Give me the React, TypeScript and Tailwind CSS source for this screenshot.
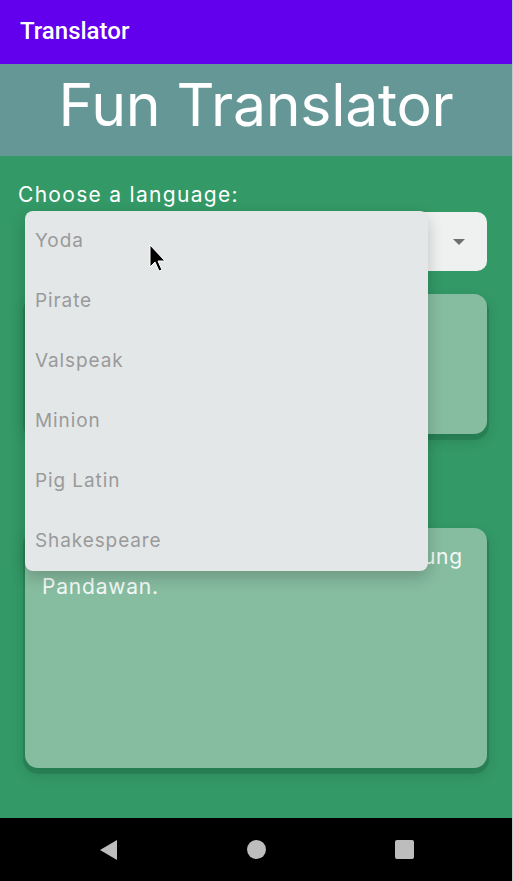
import React from 'react'

const LANGUAGES = ['Yoda', 'Pirate', 'Valspeak', 'Minion', 'Pig Latin', 'Shakespeare']

const font = { fontFamily: 'Inter, "Noto Sans", sans-serif' }

function Cursor() {
  return (
    <svg className="absolute left-[149px] top-[244px] w-[20px] h-[32px]" viewBox="0 0 20 32">
      <path d="M1 1 L1 23 L6 18 L10 27 L13 26 L9 17 L16 17 Z" fill="#000" stroke="#fff" strokeWidth={1} />
    </svg>
  )
}

export default function App() {
  return (
    <div className="relative w-[513px] h-[881px] flex flex-col overflow-hidden border-r border-[#c8c8c8]" style={font}>
      {/* app bar */}
      <div className="h-[64px] bg-[#6200ee] flex items-center px-5 shrink-0">
        <span className="text-white text-[24px] font-medium -mt-[2px]" style={{ fontFamily: 'Roboto, sans-serif' }}>Translator</span>
      </div>

      {/* title */}
      <div className="h-[92px] bg-[#659796] flex items-center justify-center shrink-0">
        <h1 className="text-white text-[59px] font-normal leading-none tracking-[-0.3px] -mt-[12px]">Fun Translator</h1>
      </div>

      {/* body */}
      <div className="flex-1 bg-[#339966] px-[25px] pt-[26px] flex flex-col">
        <p className="text-white text-[21px] tracking-[1.3px] -ml-[7px] leading-[26px]">Choose a language:</p>
        <div className="mt-[4px] h-[59px] bg-[#eef1f0] rounded-[10px] flex items-center justify-end pr-[22px]">
          <svg className="w-[12px] h-[6px]" viewBox="0 0 12 6"><path d="M0 0 L12 0 L6 6 Z" fill="#6e6e6e" /></svg>
        </div>

        <div className="mt-[23px] h-[140px] bg-[#86bca0] rounded-[13px] shadow-[0_4px_0_2px_rgba(30,110,70,0.45),0_6px_14px_rgba(0,0,0,0.15)]" />

        <div className="mt-[94px] h-[240px] bg-[#86bca0] rounded-[13px] shadow-[0_4px_0_2px_rgba(30,110,70,0.45),0_6px_14px_rgba(0,0,0,0.15)] px-[17px] pt-[14px]">
          <p className="text-white/90 text-[21px] tracking-[0.8px] leading-[30px]">
            <span className="block w-[421px] text-justify [text-align-last:justify]">Force be with you, it will, young</span>
            Pandawan.
          </p>
        </div>
      </div>

      {/* nav bar */}
      <div className="h-[63px] bg-black flex items-center justify-center gap-[129px] shrink-0">
        <svg className="w-[19px] h-[22px]" viewBox="0 0 19 22"><path d="M18 1 L18 21 L1 11 Z" fill="#bdbdbd" /></svg>
        <div className="w-[19px] h-[19px] rounded-full bg-[#bdbdbd]" />
        <div className="w-[19px] h-[19px] rounded-[2px] bg-[#bdbdbd]" />
      </div>

      {/* dropdown popup */}
      <div className="absolute left-[25px] top-[212px] w-[403px] h-[360px] bg-[#e3e7e8] rounded-[8px] shadow-[0_6px_16px_rgba(0,0,0,0.2)] flex flex-col -mt-[1px]">
        {LANGUAGES.map((l) => (
          <div key={l} className="h-[60px] flex items-center px-[10px] text-[#9a9a9a] text-[19px] tracking-[0.9px]">
            {l}
          </div>
        ))}
      </div>

      <Cursor />
    </div>
  )
}
